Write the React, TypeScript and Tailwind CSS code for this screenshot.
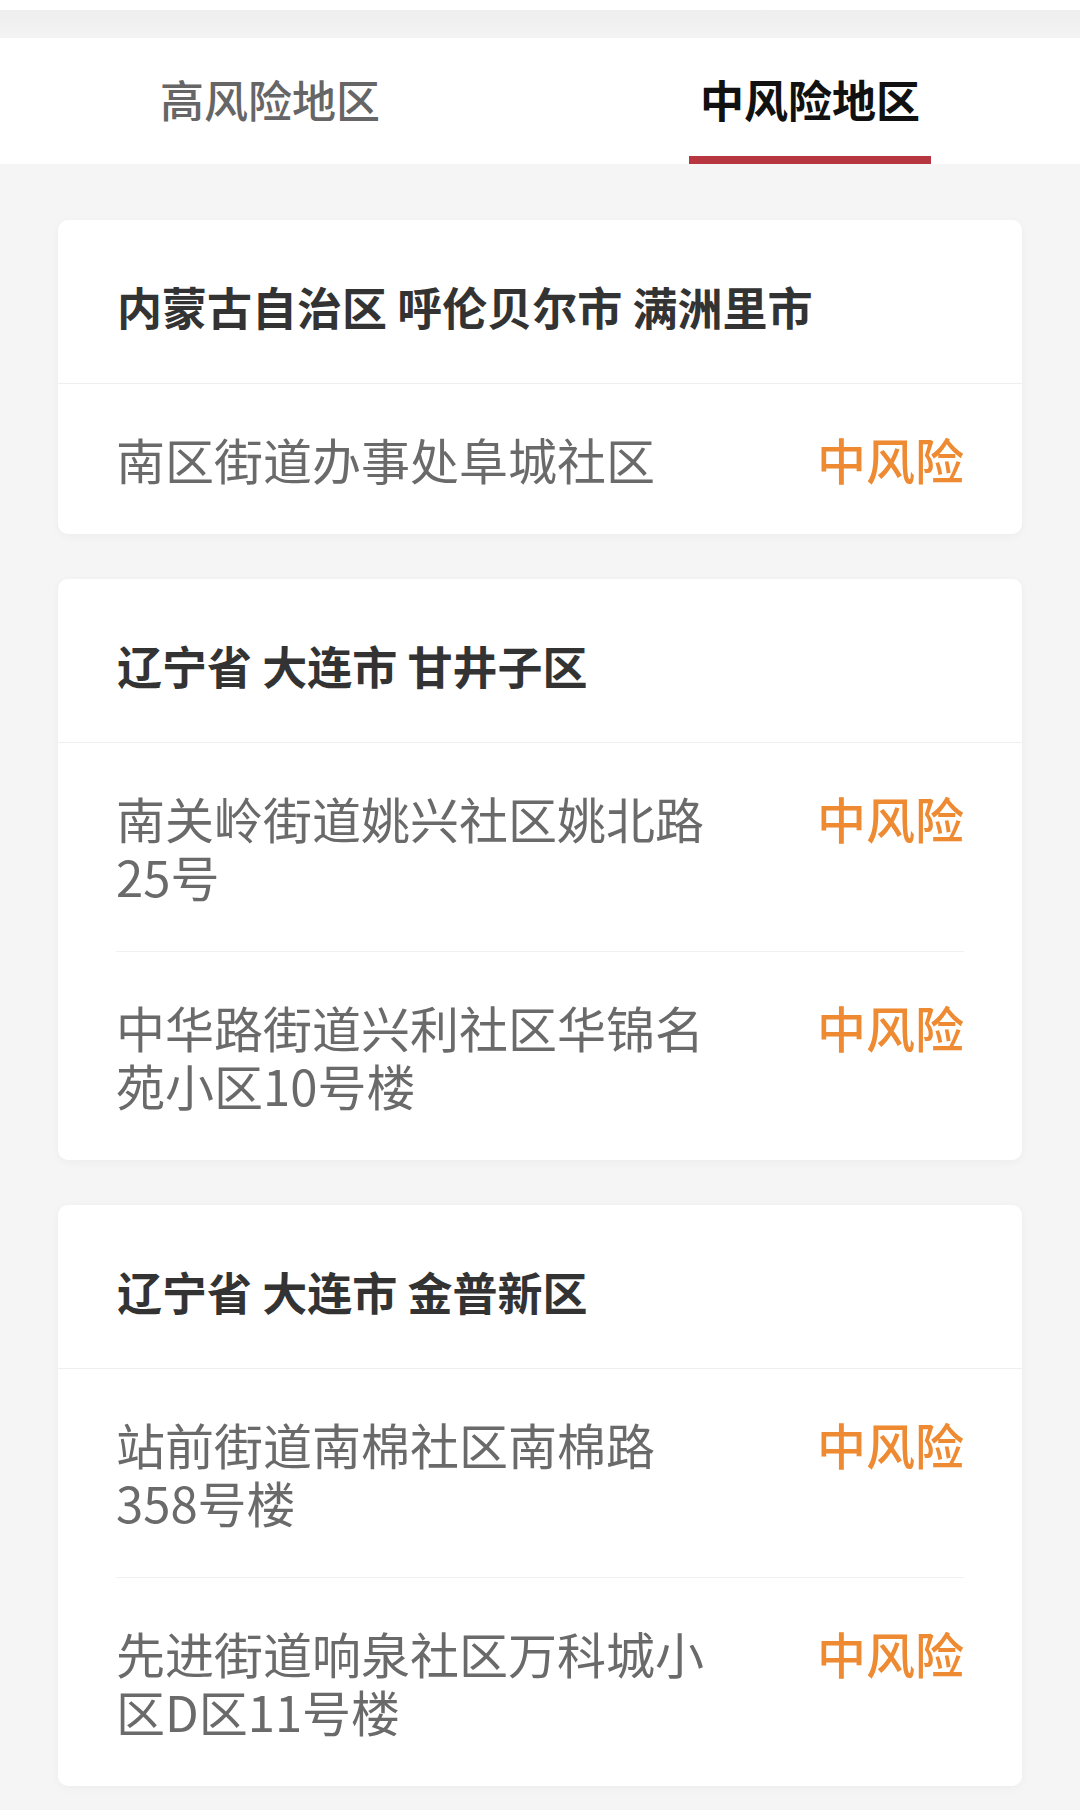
const font = "font-['Noto_Sans_CJK_SC','Noto_Sans',sans-serif]";

type Area = { region: string; items: string[] };

const areas: Area[] = [
  { region: "内蒙古自治区 呼伦贝尔市 满洲里市", items: ["南区街道办事处阜城社区"] },
  {
    region: "辽宁省 大连市 甘井子区",
    items: ["南关岭街道姚兴社区姚北路25号", "中华路街道兴利社区华锦名苑小区10号楼"],
  },
  {
    region: "辽宁省 大连市 金普新区",
    items: ["站前街道南棉社区南棉路358号楼", "先进街道响泉社区万科城小区D区11号楼"],
  },
];

function AreaCard({ area }: { area: Area }) {
  return (
    <div className="rounded-[10px] bg-white shadow-[0_2px_10px_rgba(0,0,0,0.04)]">
      {/* region title */}
      <div className="flex h-[164px] items-center border-b border-[#efefef] px-[59px] pt-[10px]">
        <span className="text-[45px] font-bold leading-[52px] text-[#333333]">{area.region}</span>
      </div>
      <div className="px-[58px]">
        {area.items.map((item, i) => (
          <div
            key={item}
            className={`flex items-start justify-between py-[46px] ${i > 0 ? "border-t border-[#f0f0f0]" : ""}`}
          >
            <span className="w-[600px] text-[49px] leading-[58px] text-[#6a6a6a]">{item}</span>
            <span className="text-[49px] font-medium leading-[58px] text-[#ee8a32]">中风险</span>
          </div>
        ))}
      </div>
    </div>
  );
}

export default function App() {
  return (
    <div className={`${font} min-h-[1810px] w-[1080px] bg-[#f5f5f5]`}>
      <div className="h-[10px] bg-white" />
      <div className="h-[28px] bg-gradient-to-b from-[#eeeeee] to-[#f4f4f4]" />

      {/* tabs */}
      <div className="flex h-[126px] bg-white">
        <div className="flex flex-1 flex-col items-center">
          <div className="flex h-[118px] items-center pt-[4px] text-[44px] font-medium text-[#666666]">
            高风险地区
          </div>
        </div>
        <div className="flex flex-1 flex-col items-center">
          <div className="flex h-[118px] items-center pt-[4px] text-[44px] font-bold text-[#111111]">
            中风险地区
          </div>
          <div className="h-[8px] w-[242px] bg-[#b83640]" />
        </div>
      </div>

      <div className="flex flex-col gap-[45px] px-[58px] pt-[56px] pb-[22px]">
        {areas.map((a) => (
          <AreaCard key={a.region} area={a} />
        ))}
      </div>
    </div>
  );
}
